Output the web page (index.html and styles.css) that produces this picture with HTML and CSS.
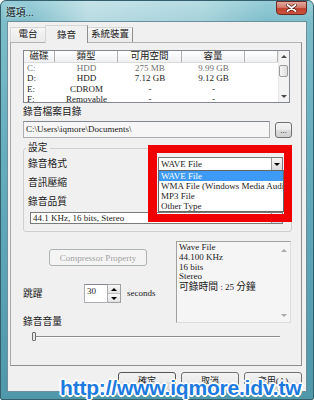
FILE: index.html
```html
<!DOCTYPE html>
<html lang="zh-Hant">
<head>
<meta charset="utf-8">
<title>選項</title>
<link rel="stylesheet" href="styles.css">
</head>
<body>
<div class="window">
  <div class="titlebar">
    <span class="title">選項...</span>
    <span class="close"><svg width="11" height="8" viewBox="0 0 11 8"><path d="M1.5 1 L9.5 7 M9.5 1 L1.5 7" stroke="#5a1d16" stroke-width="3.4" stroke-linecap="round"/><path d="M1.5 1 L9.5 7 M9.5 1 L1.5 7" stroke="#fff" stroke-width="1.9" stroke-linecap="round"/></svg></span>
  </div>
  <div class="client">
    <div class="tabs">
      <div class="tab t1">電台</div>
      <div class="tab t2">錄音</div>
      <div class="tab t3">系統裝置</div>
    </div>
    <div class="page">
      <div class="listview">
        <div class="lv-main">
          <div class="lv-head"><span>磁碟</span><span>類型</span><span>可用空間</span><span>容量</span><span></span></div>
          <div class="lv-row dim"><span>C:</span><span>HDD</span><span>275 MB</span><span>9.99 GB</span><span></span></div>
          <div class="lv-row"><span>D:</span><span>HDD</span><span>7.12 GB</span><span>9.12 GB</span><span></span></div>
          <div class="lv-row"><span>E:</span><span>CDROM</span><span>-</span><span>-</span><span></span></div>
          <div class="lv-row"><span>F:</span><span>Removable</span><span>-</span><span>-</span><span></span></div>
        </div>
        <div class="vscroll">
          <div class="sb-btn"><i class="arr up"></i></div>
          <div class="sb-track"><div class="sb-thumb"></div></div>
          <div class="sb-btn"><i class="arr down"></i></div>
        </div>
      </div>
      <div class="label zh">錄音檔案目錄</div>
      <div class="path-row">
        <div class="textbox path">C:\Users\iqmore\Documents\</div>
        <button class="btn browse">...</button>
      </div>
      <fieldset class="group">
        <legend class="zh">設定</legend>
        <div class="frow">
          <span class="flabel zh">錄音格式</span>
          <div class="combo fmt">
            <span class="val">WAVE File</span>
            <span class="drop"><i class="arr down dark"></i></span>
            <div class="dropdown">
              <div class="item sel">WAVE File</div>
              <div class="item">WMA File (Windows Media Audio</div>
              <div class="item">MP3 File</div>
              <div class="item">Other Type</div>
            </div>
            <div class="redbox"></div>
          </div>
        </div>
        <div class="frow">
          <span class="flabel zh">音訊壓縮</span>
          <div class="combo">
            <span class="val"></span>
            <span class="drop"><i class="arr down dark"></i></span>
          </div>
        </div>
        <div class="qlabel zh">錄音品質</div>
        <div class="combo quality">
          <span class="val">44.1 KHz, 16 bits, Stereo</span>
          <span class="drop"><i class="arr down dark"></i></span>
        </div>
      </fieldset>
      <div class="lower">
        <div class="lower-left">
          <button class="btn compress" disabled>Compressor Property</button>
          <div class="spin-row">
            <span class="spin-label zh">跳躍</span>
            <div class="textbox spin-text">30</div>
            <div class="spinner">
              <div><i class="arr up dark"></i></div>
              <div><i class="arr down dark"></i></div>
            </div>
            <span class="seconds">seconds</span>
          </div>
          <div class="vol-label zh">錄音音量</div>
        </div>
        <div class="info">
          <div class="info-text">
            <div>Wave File</div>
            <div>44.100 KHz</div>
            <div>16 bits</div>
            <div>Stereo</div>
            <div><span class="zh">可錄時間</span> : 25 <span class="zh">分鐘</span></div>
          </div>
          <div class="info-scroll">
            <i class="arr up light"></i>
            <i class="arr down light"></i>
          </div>
        </div>
      </div>
      <div class="slider"><div class="thumb"></div></div>
    </div>
    <div class="footer">
      <button class="btn fbtn zh default">確定</button>
      <button class="btn fbtn zh">取消</button>
      <button class="btn fbtn zh">套用(<u>A</u>)</button>
    </div>
  </div>
  <div class="watermark">http://www.iqmore.idv.tw</div>
</div>
</body>
</html>
```
FILE: styles.css
```css
* { box-sizing: border-box; }
html, body { margin: 0; padding: 0; }
body {
  width: 314px; height: 400px; overflow: hidden; background: #ffffff;
  font-family: "Liberation Serif", "Noto Sans CJK TC", serif;
  font-size: 9px; color: #1b1b1b;
}
.zh { font-size: 9.75px; }

.window {
  position: relative; width: 314px; height: 400px;
  display: flex; flex-direction: column;
  padding: 0 6px 7px;
  border: 1px solid #34606d; border-radius: 6px 6px 2px 2px;
  background:
    linear-gradient(90deg, rgba(255,255,255,0) 8%, rgba(255,255,255,.45) 28%, rgba(255,255,255,.3) 65%, rgba(255,255,255,0) 85%) 0 0 / 100% 21px no-repeat,
    linear-gradient(180deg, #97cdd7 0, #7dbdca 21px, #66adbe 150px, #4f98aa 100%);
}
.titlebar { height: 20px; display: flex; justify-content: space-between; align-items: flex-start; }
.title {
  margin-top: 5px; margin-left: -1px;
  font-family: "Noto Sans CJK TC", sans-serif; font-size: 9.75px; line-height: 12px;
  color: #111; text-shadow: 0 0 4px rgba(255,255,255,.9);
}
.close {
  width: 31px; height: 14px; display: flex; align-items: center; justify-content: center;
  border: 1px solid #6a2b24; border-radius: 0 0 4px 4px;
  background: linear-gradient(180deg, #e4a89d 0, #d37b6e 45%, #c2412f 55%, #c9533c 100%);
}
.client {
  flex: 1; display: flex; flex-direction: column;
  padding-left: 2px; background: #f0f0f0; border: 1px solid #6d8f9b;
}

/* tabs */
.tabs { height: 20px; display: flex; align-items: flex-end; }
.tab {
  height: 15px; line-height: 13px; text-align: center; font-size: 9.5px;
  border: 1px solid #d6d6d6; border-bottom: 0;
  background: linear-gradient(#f6f6f6, #eaeaea);
}
.t1 { width: 35px; border-right: 0; }
.t2 {
  width: 43px; height: 18px; padding-top: 3px; line-height: 12px;
  margin-bottom: -1px; position: relative; z-index: 1;
  background: #f0f0f0; border-right-color: #8f8f8f;
}
.t3 { width: 45px; border-left: 0; border-right-color: #8f8f8f; }

.page {
  width: 292px; height: 324px;
  border: 1px solid #8e8e8e; border-top-color: #b4b4b4; border-left-color: #a9a9a9;
  padding: 7px 9px 0 12px; background: #f0f0f0;
}

/* list view */
.listview { width: 267px; height: 53px; display: flex; border: 1px solid #828790; background: #fff; overflow: hidden; }
.lv-main { flex: 1; overflow: hidden; }
.lv-head, .lv-row { display: grid; grid-template-columns: 31px 63px 64px 63px 1fr; }
.lv-head { height: 12px; border-bottom: 1px solid #dadada; background: linear-gradient(#ffffff, #eff0f2); font-size: 9.5px; line-height: 11px; }
.lv-head span { text-align: center; border-right: 1px solid #b2b2b2; }
.lv-row { height: 10.3px; line-height: 10.3px; }
.lv-row span { text-align: center; white-space: nowrap; }
.lv-row span:first-child { text-align: left; padding-left: 3px; }
.dim { color: #707070; }
.vscroll { width: 11px; display: flex; flex-direction: column; background: #f3f3f3; border-left: 1px solid #e6e6e6; }
.sb-btn { height: 11px; display: flex; align-items: center; justify-content: center; }
.sb-track { flex: 1; padding: 3px 1px 0 0; }
.sb-thumb { height: 12px; border: 1px solid #9c9c9c; border-radius: 2px; background: linear-gradient(90deg, #f6f6f6, #dedede); }

.arr { display: block; width: 0; height: 0; border-left: 3px solid transparent; border-right: 3px solid transparent; }
.arr.up { border-bottom: 3px solid #4a4a4a; }
.arr.down { border-top: 3px solid #4a4a4a; }
.arr.up.dark { border-bottom-color: #000; }
.arr.down.dark { border-top-color: #000; }
.arr.up.light { border-bottom-color: #a8a8a8; }
.arr.down.light { border-top-color: #a8a8a8; }

.label { margin-top: 3px; height: 12px; line-height: 12px; }

.path-row { display: flex; gap: 5px; margin-top: 3px; }
.textbox { background: #f6f6f6; border: 1px solid #abadb3; border-top-color: #828790; }
.path { width: 247px; height: 17px; padding: 2px 0 0 2px; line-height: 11px; white-space: nowrap; overflow: hidden; }

.btn {
  font: inherit; color: #1b1b1b; padding: 0; margin: 0;
  border: 1px solid #707070; border-radius: 3px;
  background: linear-gradient(180deg, #f3f3f3 0, #ebebeb 50%, #dddddd 50%, #d0d0d0 100%);
}
.browse { width: 17px; height: 16px; margin-top: 1px; line-height: 12px; }

/* group box */
.group {
  margin: 4px 0 0; min-inline-size: 0;
  padding: 3px 8px 7px 4px;
  border: 1px solid #cfcfcf; border-radius: 3px;
}
.group legend { padding: 0 2px; margin-left: -2px; line-height: 12px; }
.frow { display: flex; height: 14px; }
.frow + .frow { margin-top: 5px; }
.flabel { flex: 1; line-height: 14px; }
.combo { position: relative; width: 125px; display: flex; border: 1px solid #7a7a7a; background: #fff; }
.combo .val { flex: 1; padding-left: 2px; line-height: 12px; white-space: nowrap; overflow: hidden; }
.drop {
  width: 11px; display: flex; align-items: center; justify-content: center;
  border-left: 1px solid #9a9a9a; background: linear-gradient(#f7f7f7, #dadada);
}
.qlabel { margin-top: 6px; line-height: 12px; }
.quality { width: 253px; height: 12px; margin: 4px 0 0 2px; }
.quality .val { line-height: 10px; }

.dropdown {
  position: absolute; top: 100%; left: -1px; width: 126px; z-index: 2;
  border: 1px solid #646464; background: #fff;
}
.item { height: 10px; line-height: 10px; padding-left: 2px; white-space: nowrap; overflow: hidden; }
.item.sel { background: #3d9af5; color: #fff; }
.redbox {
  position: absolute; left: -11px; top: -13px; width: 144px; height: 77px; z-index: 3;
  border: solid #f00000; border-width: 8px 8px 8px 9px;
}

/* lower */
.lower { display: flex; margin-top: 9px; }
.lower-left { flex: 1; display: flex; flex-direction: column; align-items: flex-start; }
.compress {
  margin: 8px 0 0 26px; width: 98px; height: 17px;
  color: #a3a3a3; border-color: #adb2b5; background: #f4f4f4;
}
.spin-row { display: flex; margin-top: 18px; height: 19px; line-height: 19px; }
.spin-label { width: 61px; }
.spin-text { width: 24px; padding: 1px 0 0 2px; line-height: 11px; background: #fff; }
.spinner { width: 13px; display: flex; flex-direction: column; border: 1px solid #a0a0a0; border-left: 0; }
.spinner div { flex: 1; display: flex; align-items: center; justify-content: center; background: linear-gradient(#f8f8f8, #e2e2e2); }
.spinner div + div { border-top: 1px solid #bdbdbd; }
.seconds { margin-left: 6px; }
.vol-label { margin-top: 13px; line-height: 12px; }

.info {
  width: 115px; height: 82px; margin-right: 1px; display: flex;
  border: 1px solid #a0a0a0; border-right-color: #dcdcdc; border-bottom-color: #dcdcdc;
  background: #f5f5f5;
}
.info-text { flex: 1; padding: 1px 0 0 2px; line-height: 9.75px; white-space: nowrap; }
.info-scroll { width: 12px; display: flex; flex-direction: column; justify-content: space-between; align-items: center; padding: 7px 0 5px; }

.slider {
  margin: 4px 0 0 10px; width: 247px; height: 10px; display: flex;
  background: linear-gradient(180deg, transparent 4px, #8c8c8c 4px, #8c8c8c 5px, #fdfdfd 5px, #fdfdfd 6px, transparent 6px);
}
.thumb { width: 4px; height: 9px; margin-left: -1px; border: 1px solid #6f6f6f; border-radius: 1px; background: #e9e9e9; }

/* footer */
.footer { display: flex; justify-content: flex-end; gap: 5px; margin-top: 6px; padding-right: 4px; }
.fbtn { width: 58px; height: 19px; line-height: 17px; text-align: center; }
.default { border-color: #555; }

.watermark {
  position: absolute; left: 59px; top: 376px; z-index: 5;
  font-family: "Liberation Sans", Arial, sans-serif; font-weight: bold;
  font-size: 21px; line-height: 21px; letter-spacing: -0.2px;
  color: #1d7be0; white-space: nowrap;
  text-shadow: 1px 0 #fff, -1px 0 #fff, 0 1px #fff, 0 -1px #fff,
    1px 1px #fff, -1px -1px #fff, 1px -1px #fff, -1px 1px #fff,
    2px 0 #fff, -2px 0 #fff, 0 2px #fff, 0 -2px #fff;
}
```
